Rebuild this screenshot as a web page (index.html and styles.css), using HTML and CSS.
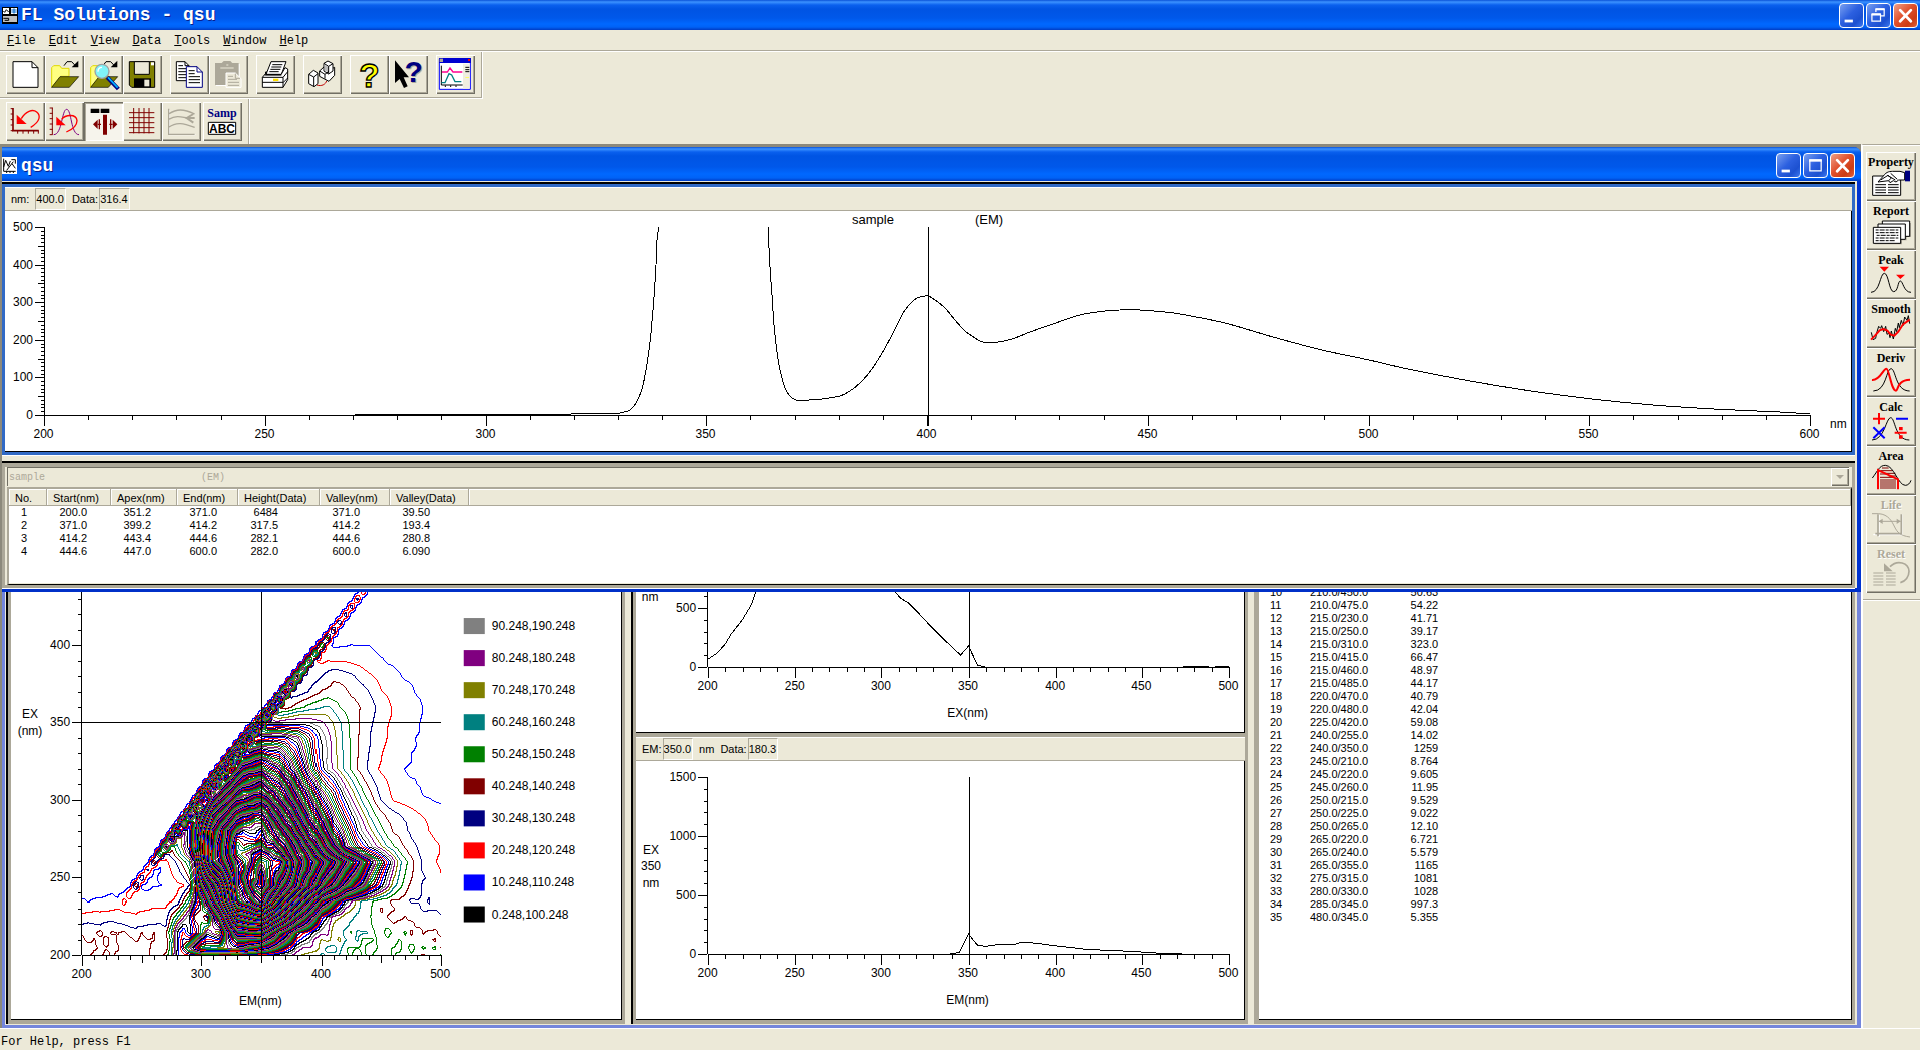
FILE: index.html
```html
<!DOCTYPE html>
<html lang="en">
<head>
    <meta charset="UTF-8">
    <meta name="viewport" content="width=device-width, initial-scale=1.0">
    <title>FL Solutions - qsu</title>
    <link rel="stylesheet" href="styles.css">
</head>
<body>
    <header class="titlebar">
        <svg class="app-icon" viewBox="0 0 48 51">
            <path fill="#000" d="M0 0h48v51H0z"/>
            <path fill="#fff" d="M3 3h18v18H3zM27 3h18v18H27z"/>
            <path fill="#c0c0c0" d="M3 27h42v18H3z"/>
            <path fill="none" stroke="#000" stroke-width="3" d="M4 12l4 4 5-8 7 7M4 34h16v6H8"/>
            <path fill="none" stroke="#06c" stroke-width="3" d="M28 9h16M28 15h16M36 4v16"/>
        </svg>
        <h1>FL Solutions - qsu</h1>
        <div class="caption-buttons">
            <button class="cap" aria-label="Minimize"><svg viewBox="0 0 75 75"><path fill="#fff" d="M15 51h27v9H15z"/></svg></button>
            <button class="cap" aria-label="Restore"><svg viewBox="0 0 75 75"><path fill="none" stroke="#fff" stroke-width="4" d="M29 26V17h27v22H46M16 34h28v22H16z"/><path stroke="#fff" stroke-width="7" d="M28 17h29M15 34h30"/></svg></button>
            <button class="cap close" aria-label="Close"><svg viewBox="0 0 75 75"><path stroke="#fff" stroke-width="9" stroke-linecap="round" d="M20 20l35 36M55 20L20 56"/></svg></button>
        </div>
    </header>

    <nav class="menu">
        <a href="#"><u>F</u>ile</a>
        <a href="#"><u>E</u>dit</a>
        <a href="#"><u>V</u>iew</a>
        <a href="#"><u>D</u>ata</a>
        <a href="#"><u>T</u>ools</a>
        <a href="#"><u>W</u>indow</a>
        <a href="#"><u>H</u>elp</a>
    </nav>

    <div class="toolbar main-tools">
        <div class="group">
            <button class="tool" aria-label="New"><svg viewBox="0 0 117 117"><path class="pg" d="M21 20h57l18 18v59H21z"/><path class="ln" d="M78 20v18h18"/></svg></button>
            <button class="tool" aria-label="Open"><svg viewBox="0 0 117 117">
                <path fill="#ffff80" stroke="#e0d800" stroke-width="3" d="M20 97V38l6-6h18l6 8h22v24H48z"/>
                <path fill="#808000" stroke="#000" stroke-width="2" d="M45 65h56L73 97H20z"/>
                <path class="ln" d="M57 32l9-12h14l12 13"/><path d="M100 17v20H80z"/>
            </svg></button>
            <button class="tool" aria-label="Find"><svg viewBox="0 0 117 117">
                <path fill="#ffff80" stroke="#e0d800" stroke-width="3" d="M20 97V38l6-6h18l6 8h22v24H48z"/>
                <path fill="#808000" stroke="#000" stroke-width="2" d="M45 65h56L73 97H20z"/>
                <path class="ln" d="M57 32l9-12h14l12 13"/><path d="M100 17v20H80z"/>
                <path stroke="#000080" stroke-width="12" d="M70 67l33 35"/><path stroke="#00b0ff" stroke-width="5" d="M72 67l29 31"/>
                <circle cx="54" cy="49" r="21" fill="#80f4f8" stroke="#a0a0a0" stroke-width="4"/>
                <path fill="none" stroke="#fff" stroke-width="4" d="M42 50c0-8 5-13 12-13"/>
            </svg></button>
            <button class="tool" aria-label="Save"><svg viewBox="0 0 117 117">
                <path fill="#808000" stroke="#000" stroke-width="3" d="M19 20h76v77H26l-7-7z"/>
                <path fill="#ece9d8" stroke="#000" stroke-width="3" d="M34 20h45v38H34z"/>
                <path fill="#fff" d="M84 22h9v9h-9z"/><path d="M33 70h51v27H33z"/><path fill="#ece9d8" d="M64 74h15v20H64z"/>
            </svg></button>
        </div>
        <div class="group">
            <button class="tool" aria-label="Copy"><svg viewBox="0 0 117 117">
                <path class="pg" d="M19 20h26l12 12v45H19z"/><path class="ln" d="M45 20v12h12M25 32h14M25 41h24M25 50h24M25 59h24M25 68h24"/>
                <path fill="#fff" stroke="#000080" stroke-width="3" d="M49 35h32l16 16v46H49z"/><path fill="none" stroke="#000080" stroke-width="3" d="M81 35v16h16"/><path class="ln" d="M56 47h18M56 56h18M56 65h34M56 74h34M56 83h34"/>
            </svg></button>
            <button class="tool" aria-label="Paste" disabled><svg viewBox="0 0 117 117">
                <path fill="#fff" d="M21 27h20l6-6h20l6 6h19v66H21z"/><path fill="#aca899" d="M18 24h20l6-6h20l6 6h19v66H18z"/>
                <path stroke="#ece9d8" stroke-width="3" d="M34 39h40M52 30h6"/>
                <path fill="#ece9d8" stroke="#fff" stroke-width="3" d="M51 54h28l17 17v26H51z"/>
                <path class="gr" d="M57 64h15M57 73h27M57 82h33M57 91h33M79 56v14h14"/>
            </svg></button>
        </div>
        <div class="group">
            <button class="tool" aria-label="Print"><svg viewBox="0 0 117 117">
                <path class="pg" d="M45 20h45L76 58H30z"/><path class="ln" d="M49 29h30M46 36h30M43 43h30M40 50h28"/>
                <path class="pg" d="M19 67l12-14h-4l4-3-2 9h46l12-21 8 4v32L81 97H19z"/>
                <path class="ln" d="M19 67h62v30M19 82h62M81 67l14-17M81 83l14-14M26 60h50"/><path fill="#ffe000" d="M51 71h16v7H51z"/>
            </svg></button>
        </div>
        <div class="group">
            <button class="tool" aria-label="Link"><svg viewBox="0 0 117 117">
                <path class="pg" d="M17 58l14-12 14 8v32l-12 9-16-9zM50 48l14-13 14 10 17-8v24L78 79 50 64z"/>
                <path class="pg" d="M63 25l12-7 15 8v22l-13 9-14-9z"/><path fill="#bbb" d="M65 29l12 7v17l-12-7z"/>
                <path class="ln" d="M17 58l15 8 13-10M32 66v28M63 25l14 9 13-8M77 34v22M50 48l16 10M66 58v13M66 58l12-9"/>
                <path fill="none" stroke="#c00000" stroke-width="3" d="M42 90c14 5 26-2 29-12"/>
            </svg></button>
        </div>
        <div class="group">
            <button class="tool" aria-label="Help"><svg viewBox="0 0 117 117"><text x="58" y="97" class="qmark yellow">?</text></svg></button>
            <button class="tool" aria-label="Context help"><svg viewBox="0 0 117 117">
                <text x="77" y="84" class="qmark shade">?</text><text x="74" y="82" class="qmark navy">?</text>
                <path d="M18 16v68l14-12 13 27 11-5-12-27h16z"/>
            </svg></button>
        </div>
        <div class="group">
            <button class="tool" aria-label="Monitor"><svg viewBox="0 0 117 117">
                <path fill="#fff" stroke="#00f" stroke-width="3" d="M10 11h93v92H10z"/><path fill="#0000d0" d="M9 9h96v15H9z"/>
                <path fill="#aca899" d="M11 11h10v10H11z"/><path fill="#f00" d="M96 12h6v6h-6z"/><path fill="#f0eee0" d="M81 26h20v75H81z"/>
                <path class="ln" d="M16 32v58h64M28 91v5M44 91v5M60 91v5M88 37h12M88 44h12M88 50h12"/>
                <path fill="none" stroke="#ff0090" stroke-width="4" d="M18 51h16l8-12 9 12h28"/>
                <path fill="none" stroke="#008080" stroke-width="4" d="M16 83h11l12-27 8 4 10 20h19"/><path fill="#ff6" d="M88 66h11v3H88z"/>
            </svg></button>
        </div>
    </div>

    <div class="toolbar view-tools">
        <div class="group">
            <button class="tool" aria-label="Undo scale"><svg viewBox="0 0 117 117">
                <path fill="none" stroke="#800000" stroke-width="5" d="M21 18v68M18 86h80"/>
                <path class="mr" d="M14 20h7M14 36h7M14 53h7M14 69h7M14 86h7M35 85v10M51 85v10M67 85v10M83 85v10M97 85v10"/>
                <path fill="none" stroke="#f00" stroke-width="4" d="M46 50c12-22 34-30 46-20s12 28-18 46"/><path fill="#f00" d="M32 38v28h30z"/>
            </svg></button>
            <button class="tool" aria-label="Auto scale"><svg viewBox="0 0 117 117">
                <path class="mr" d="M22 17v81M14 18h9M14 34h9M14 50h9M14 66h9M14 82h9M14 98h9"/>
                <path fill="none" stroke="#800080" stroke-width="3" d="M26 98c26 0 24-76 39-76s12 76 37 76"/>
                <path fill="none" stroke="#f00" stroke-width="4" d="M50 52c10-14 44-18 46 4 0 16-14 26-32 34"/><path fill="#f00" d="M34 44v26h28z"/>
            </svg></button>
            <button class="tool pressed" aria-label="Trace"><svg viewBox="0 0 117 117">
                <path d="M20 20h26v13H20zM50 20h26v13H50z"/>
                <path fill="#800000" d="M57 38h12v60H57zM27 67l14-14v28zM100 67L86 53v28z"/>
                <path stroke="#800000" stroke-width="4" d="M41 67h10M46 52v30M76 67h10M80 52v30"/>
            </svg></button>
            <button class="tool" aria-label="Grid"><svg viewBox="0 0 117 117"><path class="mr" d="M18 32h76M18 47h76M18 62h76M18 77h76M18 92h76M32 18v76M48 18v76M63 18v76M78 18v76"/></svg></button>
            <button class="tool" aria-label="Overlay" disabled><svg viewBox="0 0 117 117">
                <path fill="none" stroke="#fff" stroke-width="4" d="M22 24v74h78"/>
                <path fill="none" stroke="#aca899" stroke-width="4" d="M20 20v77h78M20 36c24-16 44-16 78 0M20 52c26-14 40-6 56-4M20 76c24-18 44-12 78 0"/>
                <path fill="none" stroke="#aca899" stroke-width="6" d="M94 36L74 48l20 14M72 48h26"/>
            </svg></button>
        </div>
        <div class="group">
            <button class="tool" aria-label="Sample name"><svg viewBox="0 0 117 117">
                <text x="57" y="45" class="samp">Samp</text><path class="pg" d="M16 61h82v36H16z"/><text x="57" y="92" class="abc">ABC</text>
            </svg></button>
        </div>
    </div>

    <main class="workspace">
        <div class="mdi">
            <section class="front">
                <div class="titlebar child">
                    <svg class="doc-icon" viewBox="0 0 48 51"><path fill="#fff" d="M0 0h45v51H0z"/><path fill="none" stroke="#000" stroke-width="3" d="M5 5v38h36M5 30l6-20 8 18 6-16M14 40l20-26M28 8h12v12M30 20l10 14M14 43v5M24 43v5M34 43v5"/></svg>
                    <h2>qsu</h2>
                    <div class="caption-buttons">
                        <button class="cap" aria-label="Minimize window"><svg viewBox="0 0 75 75"><path fill="#fff" d="M15 51h27v9H15z"/></svg></button>
                        <button class="cap" aria-label="Maximize window"><svg viewBox="0 0 75 75"><path fill="none" stroke="#fff" stroke-width="4" d="M19 20h37v35H19z"/><path stroke="#fff" stroke-width="8" d="M17 21h41"/></svg></button>
                        <button class="cap close" aria-label="Close window"><svg viewBox="0 0 75 75"><path stroke="#fff" stroke-width="9" stroke-linecap="round" d="M20 20l35 36M55 20L20 56"/></svg></button>
                    </div>
                </div>
                <div class="pane selected">
                    <div class="readout"><span>nm:</span><output class="wide">400.0</output><span>Data:</span><output>316.4</output></div>
                    <svg id="spectrum" class="chart" viewBox="5 211 1846 240"></svg>
                </div>
                <div class="pane peaks">
                    <div class="combo">
                        <select disabled aria-label="Spectrum"><option>sample&nbsp;&nbsp;&nbsp;&nbsp;&nbsp;&nbsp;&nbsp;&nbsp;&nbsp;&nbsp;&nbsp;&nbsp;&nbsp;&nbsp;&nbsp;&nbsp;&nbsp;&nbsp;&nbsp;&nbsp;&nbsp;&nbsp;&nbsp;&nbsp;&nbsp;&nbsp;(EM)</option></select>
                        <span class="drop"></span>
                    </div>
                    <div class="table-box">
                        <table class="peak-table">
                            <colgroup><col class="c-no"><col class="c-start"><col class="c-apex"><col class="c-end"><col class="c-height"><col class="c-valley"><col class="c-vdata"><col></colgroup>
                            <thead>
                                <tr><th>No.</th><th>Start(nm)</th><th>Apex(nm)</th><th>End(nm)</th><th>Height(Data)</th><th>Valley(nm)</th><th>Valley(Data)</th><th></th></tr>
                            </thead>
                            <tbody id="peakRows"></tbody>
                        </table>
                    </div>
                </div>
            </section>

            <section class="back">
                <div class="pane dim">
                    <svg id="contour" class="chart" viewBox="11 593 610 426"></svg>
                </div>
                <div class="split">
                    <div class="pane dim upper"><svg id="exChart" class="chart" viewBox="636 593 608 140"></svg></div>
                    <div class="pane dim">
                        <div class="readout"><span>EM:</span><output>350.0</output><span>nm</span><span>Data:</span><output>180.3</output></div>
                        <svg id="emChart" class="chart" viewBox="636 762 608 257"></svg>
                    </div>
                </div>
                <div class="pane dim list">
                    <table class="ex-table"><tbody id="exRows"></tbody></table>
                </div>
            </section>
        </div>

        <aside class="side">
            <div class="side-tools">
                <button><span>Property</span><svg viewBox="0 0 150 93">
                    <path class="pg" d="M20 18h84v58H20z"/><path class="ln" d="M28 44h32M28 52h32M28 60h32M28 68h32M66 44h32M66 52h32M66 60h32M66 68h32"/>
                    <path class="pg" d="M36 36l16-18C62 4 72 4 84 4h18l14 4v22H98l-8 6-8-4-10 6-4-6z"/><path class="ln" d="M44 30l22-14 10 8-8 8M64 16l24 14M74 10l20 18"/>
                    <path fill="#000080" d="M117 2h15v32h-15z"/>
                </svg></button>
                <button><span>Report</span><svg viewBox="0 0 150 93">
                    <path fill="#aca899" d="M26 76h82V64h14V54h13V12h-4v38H26z"/>
                    <path class="pg" d="M49 6h82v46H49z"/><path class="pg" d="M36 15h82v46H36z"/><path class="pg" d="M22 25h82v48H22z"/>
                    <path class="ln" stroke-dasharray="9 3 15 3" d="M29 33h68M29 41h68M32 49h65M29 57h68M29 65h60"/>
                </svg></button>
                <button><span>Peak</span><svg viewBox="0 0 150 93"><path class="ln" d="M15 73C42 73 42 16 55 16s14 55 28 55 12-32 20-32 10 34 32 34"/><path fill="#f00" d="M41 -4h28L55 11zM90 20h27l-14 13z"/></svg></button>
                <button><span>Smooth</span><svg viewBox="0 0 150 93"><path class="ln" d="M16 46l5 22 8-4 3-16 6-20 6 6 3-8 6 18 6-16 4 24 6-4 3 14 4-20 6 24 6-32 4 10 5-26 3 14 6-22 5 16 5-26 7 10 4-14 4 24"/><path class="rd" d="M15 68l12-12 14-16 11-4 12 5 10 12 11 3 12-12 14-22 20-14"/></svg></button>
                <button><span>Deriv</span><svg viewBox="0 0 150 93"><path class="ln" d="M22 75C62 75 60 8 75 8s12 67 56 67"/><path class="rd" d="M18 42c24 2 34-34 43-34s14 66 29 66c7 0 2-32 42-33"/></svg></button>
                <button><span>Calc</span><svg viewBox="0 0 150 93"><path class="ln" d="M18 75C56 75 60 8 74 8s12 67 56 67"/><path class="rd" d="M21 11h36M39 -6v34M86 53h36"/><path fill="#f00" d="M99 36h11v10H99zM99 61h11v10H99z"/><path class="bl" d="M90 11h36M22 37l34 33M56 37L22 70"/></svg></button>
                <button><span>Area</span><svg viewBox="0 0 150 93"><path fill="none" stroke="#800000" stroke-width="3" d="M48 12h20M44 20h36M56 28h32M68 36h22M42 30h18M42 40h40M42 48h48M42 54h48M42 60h48M42 66h48M42 72h48"/><path class="ln" d="M19 42C36 20 40 4 58 4c26 0 38 60 60 60 8 0 14-6 17-15"/><path class="rd" d="M36 76V18l60 28v30"/></svg></button>
                <button disabled><span>Life</span><svg viewBox="0 0 150 93"><path stroke="#fff" fill="none" stroke-width="4" d="M39 6v66M108 4v64M22 65h84"/><path fill="none" stroke="#aca899" stroke-width="5" d="M36 4v66M106 4v58M28 62h80"/><path class="gr" d="M18 2h20c30 2 40 24 48 40s16 26 46 30M40 25h64"/><path fill="#aca899" d="M38 25l12-8v16zM104 25l-12-8v16z"/></svg></button>
                <button disabled><span>Reset</span><svg viewBox="0 0 150 93"><path class="gr" d="M22 33h30M22 42h30M22 51h30M22 60h30M22 69h30M60 33h29M60 42h29M60 51h29M60 60h29M60 69h29"/><path fill="none" stroke="#aca899" stroke-width="5" d="M72 14C94-8 128 2 129 28c0 16-10 30-26 34"/><path fill="#aca899" d="M54 4v24h26z"/></svg></button>
            </div>
        </aside>
    </main>

    <footer class="status">For Help, press F1</footer>

    <script src="charts.js"></script>
</body>
</html>
```
FILE: styles.css
```css
* {
    box-sizing: border-box;
}

body {
    margin: 0;
    min-height: 100vh;
    display: flex;
    flex-direction: column;
    background-color: #ece9d8;
    color: #000;
    font-family: "Liberation Sans", Arial, sans-serif;
    font-size: 11px;
}

button {
    font: inherit;
    padding: 0;
    border: none;
    background: #ece9d8;
}

svg {
    display: block;
}

/* title bars */
.titlebar {
    display: flex;
    align-items: center;
    height: 30px;
    padding: 0 2px;
    background: linear-gradient(#0a52d8 0, #3c92ff 2px, #0a60ee 5px, #0054e3 9px, #0058ea 18px, #0068ff 24px, #0062f6 27px, #003cc4 30px);
    color: #fff;
}

.titlebar h1, .titlebar h2 {
    flex: 1;
    margin: 0 0 0 3px;
    font-family: "Liberation Mono", monospace;
    font-size: 18px;
    line-height: 30px;
    font-weight: bold;
    text-shadow: 1px 1px 0 #0a1e8c;
}

.titlebar.child {
    height: 34px;
    padding: 2px 2px 0 0;
    border-radius: 0 7px 0 0;
    background: linear-gradient(#0a52d8 0, #3c92ff 2px, #0a60ee 5px, #0054e3 9px, #0058ea 20px, #0068ff 27px, #0062f6 31px, #003cc4 34px);
}

.titlebar.child h2 {
    padding-top: 2px;
}

.app-icon, .doc-icon {
    width: 16px;
    height: 17px;
}

.caption-buttons {
    display: flex;
    gap: 2px;
}

.cap {
    width: 25px;
    height: 25px;
    border: 1px solid #fff;
    border-radius: 4px;
    background: linear-gradient(135deg, #7aa0f0, #2c60e0 45%, #1c50d0 75%, #3c78f0);
}

.cap.close {
    background: linear-gradient(135deg, #f0a088, #e0502c 45%, #cc3c14 75%, #e06038);
}

.cap svg {
    width: 23px;
    height: 23px;
}

/* menu and toolbars */
.menu {
    display: flex;
    gap: 13px;
    height: 22px;
    padding: 0 7px;
    line-height: 22px;
    border-bottom: 1px solid #fff;
    box-shadow: inset 0 -1px 0 #aca899;
    font-family: "Liberation Mono", monospace;
    font-size: 12px;
}

.menu a {
    color: #000;
    text-decoration: none;
}

.toolbar {
    display: flex;
    align-self: flex-start;
    gap: 8px;
    padding: 3px 7px 0 6px;
    border-right: 1px solid #fff;
    box-shadow: inset -1px 0 0 #aca899;
}

.main-tools {
    height: 47px;
    border-bottom: 1px solid #fff;
    box-shadow: inset -1px -1px 0 #aca899;
}

.view-tools {
    height: 45px;
    gap: 2px;
}

.group {
    display: flex;
}

.tool {
    width: 39px;
    height: 39px;
    box-shadow: inset 1px 1px 0 #fff, inset -1px -1px 0 #716f64, inset -2px -2px 0 #aca899;
}

.tool svg {
    width: 39px;
    height: 39px;
}

.tool.pressed {
    background: #f6f4ec;
    box-shadow: inset 1px 1px 0 #716f64, inset 2px 2px 0 #aca899, inset -1px -1px 0 #fff;
}

.pg {
    fill: #fff;
    stroke: #000;
    stroke-width: 3;
}

.ln {
    fill: none;
    stroke: #000;
    stroke-width: 3;
}

.mr {
    fill: none;
    stroke: #800000;
    stroke-width: 3;
}

.gr {
    fill: none;
    stroke: #aca899;
    stroke-width: 3;
}

.rd, .bl {
    fill: none;
    stroke: #f00;
    stroke-width: 6;
}

.bl {
    stroke: #00f;
}

.qmark {
    font-size: 100px;
    font-weight: bold;
    text-anchor: middle;
}

.qmark.yellow {
    fill: #ff0;
    stroke: #000;
    stroke-width: 4;
}

.qmark.navy, .qmark.shade {
    font-size: 90px;
    fill: #000080;
}

.qmark.shade {
    fill: #aca899;
}

.samp, .abc {
    font-size: 36px;
    font-weight: bold;
    text-anchor: middle;
}

.samp {
    font-family: "Liberation Serif", serif;
    fill: #000080;
}

/* workspace */
.workspace {
    flex: 1;
    display: flex;
}

.mdi {
    flex: 1;
    min-width: 0;
    display: flex;
    flex-direction: column;
    border-top: 3px solid #8c897c;
    border-left: 2px solid #8c897c;
    background: #8c897c;
}

.front {
    border-right: 4px solid #0033d0;
    border-bottom: 4px solid #0030c8;
    border-radius: 0 8px 0 0;
    background: #ece9d8;
}

.front .titlebar {
    margin-right: -4px;
    padding-right: 6px;
}

.front .pane {
    margin-right: 2px;
}

.pane {
    background: #fff;
}

.pane.selected {
    border: 3px solid #316ac5;
    box-shadow: 0 -2px 0 #000, 0 1px 0 #fff;
    margin-top: 3px;
}

.chart {
    width: 100%;
    height: auto;
    font-size: 12px;
    border: 0 solid #000;
    box-sizing: content-box;
}

.pane.selected .chart {
    width: calc(100% - 1px);
    border-width: 0 1px 1px 0;
}

.chart .heading {
    font-size: 13px;
}

.readout {
    display: flex;
    align-items: center;
    gap: 6px;
    height: 24px;
    padding: 0 6px;
    background: #ece9d8;
    border-top: 1px solid #fff;
    border-bottom: 1px solid #aca899;
}

.readout output {
    height: 22px;
    padding: 0 1px 0 0;
    line-height: 21px;
    border: 1px solid;
    border-color: #aca899 #fff #fff #aca899;
}

.readout span + output {
    margin-left: -5px;
}

.readout span + .wide {
    margin-left: 0;
}

.pane.peaks {
    margin-top: 8px;
    padding: 1px 0 0;
    border: 3px solid #aca899;
    border-top-width: 4px;
    box-shadow: 0 -2px 0 #000, 0 1px 0 #fff;
    background: #ece9d8;
}

.combo {
    display: flex;
    height: 18px;
    margin: 0 3px 0 2px;
    border-left: 1px solid #716f64;
    box-shadow: 0 -1px 0 #716f64;
}

.combo select {
    flex: 1;
    appearance: none;
    padding: 0 1px;
    border: none;
    background: #ece9d8;
    color: #aca899;
    opacity: 1;
    font-family: "Liberation Mono", monospace;
    font-size: 10px;
}

.drop {
    display: flex;
    align-items: center;
    justify-content: center;
    width: 18px;
    box-shadow: inset 1px 1px 0 #fff, inset -1px -1px 0 #716f64, inset -2px -2px 0 #aca899;
}

.drop::before {
    content: "";
    border: 4px solid transparent;
    border-top-color: #aca899;
    border-bottom: none;
}

.table-box {
    height: 98px;
    margin-top: 1px;
    margin-left: 2px;
    border: 2px solid #aca899;
    border-right: 1px solid #000;
    border-bottom: 1px solid #000;
    background: #fff;
    box-shadow: inset 0 -1px 0 #ece9d8;
}

.peak-table {
    width: 100%;
    table-layout: fixed;
    border-collapse: collapse;
}

.peak-table th {
    height: 17px;
    padding: 0 0 0 6px;
    background: #ece9d8;
    box-shadow: inset -1px -1px 0 #aca899, inset 1px 1px 0 #fff;
    font-weight: normal;
    text-align: left;
    white-space: nowrap;
}

.peak-table td {
    height: 13px;
    padding: 0 0 0 12px;
    line-height: 13px;
}

.num {
    display: inline-block;
    width: 28px;
    text-align: right;
}

.c-no { width: 38px; }
.c-start { width: 64px; }
.c-apex { width: 66px; }
.c-end { width: 61px; }
.c-height { width: 82px; }
.c-valley { width: 70px; }
.c-vdata { width: 79px; }

.back {
    flex: 1;
    display: grid;
    grid-template-columns: 619fr 617fr 601fr;
    gap: 6px;
    padding: 0 2px 1px 1px;
    border: solid #7486dc;
    border-width: 0 4px 3px 3px;
    background: #ece9d8;
}

.pane.dim {
    min-width: 0;
    border: solid #aca899;
    border-width: 0 3px 4px;
    box-shadow: inset -1px -1px 0 #000;
}

.split {
    min-width: 0;
    display: flex;
    flex-direction: column;
    border-left: 2px solid #000;
}

.back > .pane.dim {
    position: relative;
    border-left-width: 5px;
}

/* dark edge beside the grey pane border */
.back > .pane.dim::before {
    content: "";
    position: absolute;
    top: 0;
    bottom: -4px;
    left: -5px;
    width: 2px;
    background: #000;
}

.pane.dim .chart {
    margin-bottom: 1px;
}

.split .pane:last-child {
    flex: 1;
}

.list {
    overflow: hidden;
}

.ex-table {
    margin: -6px 0 0 11px;
    border-collapse: collapse;
}

.ex-table td {
    height: 13px;
    padding: 0;
    line-height: 13px;
    min-width: 40px;
}

.ex-table td:last-child {
    width: 70px;
    text-align: right;
}

/* analysis buttons on the right */
.side {
    width: 59px;
    border-top: 1px solid #aca899;
    border-left: 2px solid #fff;
}

.side-tools {
    display: flex;
    flex-direction: column;
    padding: 6px 2px 6px 3px;
    border-top: 1px solid #fff;
    border-bottom: 1px solid #aca899;
    box-shadow: 0 1px 0 #fff;
}

.side button {
    width: 50px;
    height: 49px;
    box-shadow: inset 1px 1px 0 #fff, inset -1px -1px 0 #716f64, inset -2px -2px 0 #aca899;
    font-family: "Liberation Serif", serif;
    font-size: 12px;
    font-weight: bold;
    line-height: 16px;
    color: #000;
}

.side button span {
    display: block;
    padding-top: 2px;
    height: 18px;
}

.side button:disabled {
    color: #aca899;
    text-shadow: 1px 1px 0 #fff;
}

.side svg {
    width: 50px;
    height: 31px;
    overflow: visible;
}

.status {
    height: 22px;
    padding: 0 1px;
    border-top: 1px solid #fff;
    font-family: "Liberation Mono", monospace;
    font-size: 12px;
    line-height: 26px;
}
```
FILE: charts.js
```js
const NS = 'http://www.w3.org/2000/svg';

function add(svg, tag, attrs, text) {
    const el = document.createElementNS(NS, tag);
    for (const key in attrs) el.setAttribute(key, attrs[key]);
    if (text !== undefined) el.textContent = text;
    svg.appendChild(el);
    return el;
}

function stroke(svg, d) {
    add(svg, 'path', { d: d, fill: 'none', stroke: '#000', 'shape-rendering': 'crispEdges' });
}

// smooth line through a flat list of x,y values
function curve(svg, p) {
    let d = `M${p[0]} ${p[1]}`;
    for (let i = 0; i < p.length - 2; i += 2) {
        const a = Math.max(i - 2, 0);
        const b = Math.min(i + 4, p.length - 2);
        d += `C${p[i] + (p[i + 2] - p[a]) / 6} ${p[i + 1] + (p[i + 3] - p[a + 1]) / 6}`
            + ` ${p[i + 2] - (p[b] - p[i]) / 6} ${p[i + 3] - (p[b + 1] - p[i + 1]) / 6}`
            + ` ${p[i + 2]} ${p[i + 3]}`;
    }
    stroke(svg, d);
}

function label(svg, x, y, text, anchor = 'middle', cls = '') {
    add(svg, 'text', { x: x, y: y, 'text-anchor': anchor, class: cls }, text);
}

// horizontal axis: value v0..v1 drawn between x0 and x1
function xAxis(svg, y, x0, x1, v0, v1, labels) {
    let d = `M${x0} ${y}.5H${x1 + 1}`;
    for (let v = v0; v <= v1; v += 10) {
        const x = Math.round(x0 + (v - v0) * (x1 - x0) / (v1 - v0)) + 0.5;
        d += `M${x} ${y}v${v % labels === 0 ? 11 : v % 50 === 0 ? 8 : 5}`;
        if (v % labels === 0) label(svg, x - 1, y + 23, v);
    }
    stroke(svg, d);
}

// vertical axis: v0 at the bottom (y0), v1 at the top (y1)
function yAxis(svg, x, y0, y1, v0, v1, minor, middle, labels) {
    let d = `M${x}.5 ${y0}V${y1}`;
    for (let v = v0; v <= v1; v += minor) {
        const y = Math.round(y0 + (v - v0) * (y1 - y0) / (v1 - v0));
        d += `M${x} ${y}.5h-${v % labels === 0 ? 9 : v % middle === 0 ? 6 : 3}`;
        if (v % labels === 0) label(svg, x - 11, y + 4, v, 'end');
    }
    stroke(svg, d);
}

// emission spectrum
const spectrum = document.getElementById('spectrum');
yAxis(spectrum, 44, 415, 227, 0, 500, 10, 50, 100);
xAxis(spectrum, 415, 44, 1810, 200, 600, 50);
label(spectrum, 852, 224, 'sample', 'start', 'heading');
label(spectrum, 975, 224, '(EM)', 'start', 'heading');
label(spectrum, 1830, 428, 'nm', 'start');
stroke(spectrum, 'M928.5 227V426M355 414.5H571M571 413.5H620');
curve(spectrum, [620, 413, 630, 410, 636, 403, 642, 389, 646, 370, 649, 350, 651, 333, 654, 297, 656, 265, 657, 240, 659, 227]);
curve(spectrum, [768, 227, 770, 267, 772, 295, 774, 325, 777, 352, 780, 370, 785, 388, 790, 396, 796, 400, 809, 400, 822, 399, 840, 396, 850, 391, 861, 382, 872, 369, 885, 348, 895, 329, 905, 310, 914, 300, 920, 297, 928, 296, 935, 300, 945, 308, 955, 320, 965, 331, 975, 338, 983, 342, 998, 342, 1012, 339, 1030, 332, 1050, 325, 1080, 315, 1105, 311, 1120, 310, 1140, 310, 1165, 312, 1180, 314, 1225, 323, 1273, 337, 1322, 350, 1369, 360, 1408, 369, 1470, 381, 1531, 391, 1592, 399, 1653, 405, 1714, 409, 1780, 412, 1810, 414]);

// excitation slice
const exChart = document.getElementById('exChart');
yAxis(exChart, 707, 668, 597, 0, 600, 100, 500, 500);
xAxis(exChart, 668, 708, 1228, 200, 500, 50);
label(exChart, 650, 602, 'nm');
label(exChart, 967, 718, 'EX(nm)');
stroke(exChart, 'M968.5 593V677M707.5 593V597');
stroke(exChart, 'M708 660L717 654 725 645 731 635 742 621 751 606 756 592M894 592L900 599 908 604 918 614 930 627 942 639 960 656 968 647 977 666 985 668M1182 667H1208M1214 667H1228');

// emission slice
const emChart = document.getElementById('emChart');
yAxis(emChart, 707, 955, 778, 0, 1500, 100, 500, 500);
xAxis(emChart, 955, 708, 1228, 200, 500, 50);
label(emChart, 651, 855, 'EX');
label(emChart, 651, 871, '350');
label(emChart, 651, 888, 'nm');
label(emChart, 967, 1005, 'EM(nm)');
stroke(emChart, 'M968.5 778V964');
stroke(emChart, 'M948 955L959 953 968 935 977 946 985 947 1000 945 1015 945 1020 943 1037 944 1050 946 1068 948 1085 950 1105 951 1130 952 1160 954 1190 955');

// contour map: for each excitation, pairs of [emission, intensity]
const colors = ['#000000', '#0000ff', '#ff0000', '#000080', '#800000', '#008000', '#008080', '#808000', '#800080', '#808080'];
const rows = [
    [200, [[200, 42], [270, 40], [275, 60], [280, 110], [300, 115], [350, 92], [380, 75], [410, 58], [440, 52], [500, 44]]],
    [205, [[200, 46], [270, 38], [275, 55], [282, 120], [300, 260], [330, 290], [350, 220], [380, 88], [400, 68], [440, 53], [500, 43]]],
    [215, [[200, 38], [270, 36], [278, 70], [282, 140], [290, 92], [297, 130], [305, 190], [315, 160], [330, 440], [350, 460], [365, 270], [380, 140], [400, 80], [420, 60], [450, 50], [500, 40]]],
    [225, [[200, 24], [250, 24], [270, 24], [280, 60], [290, 100], [297, 170], [305, 120], [318, 320], [330, 680], [350, 780], [380, 330], [400, 120], [410, 76], [430, 54], [460, 38], [500, 32]]],
    [235, [[200, 11], [240, 13], [270, 17], [280, 25], [290, 60], [300, 140], [315, 420], [330, 950], [350, 1120], [380, 560], [400, 240], [420, 100], [432, 62], [455, 40], [480, 30], [500, 22]]],
    [245, [[200, 3], [250, 8], [270, 11], [285, 20], [292, 36], [297, 110], [300, 260], [315, 520], [330, 980], [350, 1240], [380, 780], [400, 480], [420, 280], [440, 150], [450, 105], [458, 70], [470, 46], [482, 32], [500, 24]]],
    [260, [[200, 2], [265, 9], [272, 20], [282, 36], [290, 60], [295, 110], [300, 420], [310, 740], [330, 1000], [350, 1180], [365, 1130], [380, 860], [400, 620], [420, 410], [440, 220], [457, 102], [465, 64], [477, 40], [484, 29], [500, 18]]],
    [268, [[200, 1], [266, 14], [275, 40], [285, 80], [294, 140], [300, 480], [310, 760], [330, 1060], [350, 1080], [365, 1000], [380, 800], [400, 480], [420, 200], [436, 110], [455, 62], [470, 40], [482, 28], [500, 20]]],
    [280, [[200, 1], [272, 20], [285, 70], [294, 140], [299, 400], [310, 720], [330, 1000], [350, 1000], [370, 800], [390, 480], [410, 230], [430, 102], [442, 70], [451, 51], [459, 40], [474, 29], [491, 20], [500, 17]]],
    [288, [[200, 1], [280, 20], [294, 100], [300, 380], [310, 640], [330, 890], [343, 960], [352, 960], [370, 700], [390, 400], [410, 190], [426, 100], [440, 62], [448, 48], [456, 40], [470, 30], [488, 20], [500, 15]]],
    [300, [[200, 0], [290, 20], [300, 120], [310, 420], [330, 700], [350, 770], [370, 560], [385, 360], [400, 210], [419, 100], [433, 60], [443, 42], [449, 30], [460, 20], [483, 11], [500, 9]]],
    [320, [[200, 0], [310, 60], [320, 180], [335, 440], [350, 480], [365, 400], [380, 260], [390, 170], [401, 100], [413, 70], [424, 50], [430, 40], [438, 30], [447, 20], [470, 10], [500, 5]]],
    [340, [[200, 0], [330, 60], [340, 160], [350, 215], [365, 220], [380, 190], [390, 140], [398, 102], [412, 70], [420, 56], [431, 40], [441, 30], [455, 20], [480, 10], [500, 7]]],
    [350, [[200, 0], [345, 50], [358, 84], [380, 94], [390, 92], [400, 83], [410, 70], [423, 50], [431, 40], [443, 30], [456, 20], [483, 10], [500, 7]]],
    [360, [[200, 0], [358, 20], [370, 34], [380, 46], [392, 56], [405, 62], [416, 50], [433, 40], [445, 30], [458, 20], [487, 10], [500, 7]]],
    [370, [[200, 0], [370, 16], [380, 24], [390, 31], [400, 41], [415, 45], [422, 40], [441, 30], [451, 20], [478, 10], [500, 5]]],
    [380, [[200, 0], [380, 18], [392, 24], [403, 32], [408, 40], [420, 35], [430, 29], [441, 21], [466, 10], [500, 4]]],
    [390, [[200, 0], [390, 14], [405, 20], [420, 20], [430, 17], [453, 10], [500, 3]]],
    [400, [[200, 0], [400, 8], [420, 10], [432, 11], [445, 9], [500, 2]]],
    [410, [[200, 0], [500, 1]]],
    [440, [[200, 0], [500, 0]]]
];

// height of the scatter ridge where excitation equals emission
const ridge = [[200, 0], [232, 5], [240, 20], [245, 45], [255, 25], [265, 60], [280, 130], [300, 240], [330, 300], [350, 230], [370, 130], [385, 80], [400, 58], [415, 42], [435, 34], [450, 30]];

function lerp(points, v) {
    for (let i = 1; i < points.length; i++) {
        if (v <= points[i][0]) {
            const [a, za] = points[i - 1];
            const [b, zb] = points[i];
            return za + (zb - za) * (v - a) / (b - a);
        }
    }
    return points[points.length - 1][1];
}

function noise(a, b) {
    const s = Math.sin(a * 12.9898 + b * 78.233) * 43758.5453;
    return (s - Math.floor(s)) * 2 - 1;
}

function intensity(em, ex) {
    let i = 1;
    while (i < rows.length - 1 && rows[i][0] < ex) i++;
    const t = (ex - rows[i - 1][0]) / (rows[i][0] - rows[i - 1][0]);
    let z = lerp(rows[i - 1][1], em) * (1 - t) + lerp(rows[i][1], em) * t;
    if (ex > 240 && em < ex) z *= Math.max(0, 1 - (ex - em) / 8);
    let rough = 0.6;
    if (ex < 220) rough = em > 380 ? 10 : 6;
    else if (ex < 240) rough = em > 400 ? 5 : 2;
    else if (ex < 255) rough = em > 470 ? 4 : 2;
    if (z > 3) z += noise(em, ex) * (z < 85 ? rough : z * 0.022);
    const off = (em - ex) / 3;
    return z + lerp(ridge, ex) * Math.exp(-off * off);
}

// the instrument samples every 5 nm and interpolates between the points
const grid = [];
for (let ex = 200; ex <= 445; ex += 5) {
    const line = [];
    for (let em = 200; em <= 505; em += 5) line.push(intensity(em, ex));
    grid.push(line);
}

function levelAt(px, py) {
    const u = (px - 82) / 1.1933 / 5;
    const v = (955 - py) / 1.547 / 5;
    const c = Math.floor(u), r = Math.floor(v);
    const fx = u - c, fy = v - r;
    const z = (grid[r][c] * (1 - fx) + grid[r][c + 1] * fx) * (1 - fy)
        + (grid[r + 1][c] * (1 - fx) + grid[r + 1][c + 1] * fx) * fy;
    return Math.floor((z - 0.248) / 10);
}

const contour = document.getElementById('contour');
const paths = colors.map(() => '');
for (let y = 593; y < 955; y++) {
    for (let x = 82; x < 440; x++) {
        const here = levelAt(x, y);
        const right = levelAt(x + 1, y);
        const up = levelAt(x, y - 1);
        const top = Math.max(here, right, up);
        if (top > 0 && (here !== right || here !== up)) {
            paths[top % 10] += `M${x} ${y}h1v1h-1z`;
        }
    }
}
paths.forEach((d, i) => add(contour, 'path', { d: d, fill: colors[i], 'shape-rendering': 'crispEdges' }));

yAxis(contour, 81, 955, 600, 200, 430, 10, 50, 50);
xAxis(contour, 955, 82, 440, 200, 500, 100);
label(contour, 30, 719, 'EX');
label(contour, 30, 736, '(nm)');
label(contour, 260, 1005, 'EM(nm)');
stroke(contour, 'M81.5 593V600M261.5 593V963M75 723.5H440');
for (let i = 9; i >= 0; i--) {
    const y = 619 + (9 - i) * 32;
    add(contour, 'rect', { x: 463, y: y, width: 21, height: 16, fill: colors[i] });
    label(contour, 491, y + 12, `${i * 10 + 0.248},${100 + i * 10}.248`, 'start');
}

// peak table
const peaks = [
    ['200.0', '351.2', '371.0', '6484', '371.0', '39.50'],
    ['371.0', '399.2', '414.2', '317.5', '414.2', '193.4'],
    ['414.2', '443.4', '444.6', '282.1', '444.6', '280.8'],
    ['444.6', '447.0', '600.0', '282.0', '600.0', '6.090']
];
document.getElementById('peakRows').innerHTML = peaks.map((p, i) =>
    `<tr><td>${i + 1}</td>${p.map(v => `<td><span class="num">${v}</span></td>`).join('')}</tr>`).join('');

// EX/EM pairs, numbered from 10
const pairs = [
    ['210.0/450.0', '50.63'], ['210.0/475.0', '54.22'], ['215.0/230.0', '41.71'], ['215.0/250.0', '39.17'],
    ['215.0/310.0', '323.0'], ['215.0/415.0', '66.47'], ['215.0/460.0', '48.97'], ['215.0/485.0', '44.17'],
    ['220.0/470.0', '40.79'], ['220.0/480.0', '42.04'], ['225.0/420.0', '59.08'], ['240.0/255.0', '14.02'],
    ['240.0/350.0', '1259'], ['245.0/210.0', '8.764'], ['245.0/220.0', '9.605'], ['245.0/260.0', '11.95'],
    ['250.0/215.0', '9.529'], ['250.0/225.0', '9.022'], ['250.0/265.0', '12.10'], ['265.0/220.0', '6.721'],
    ['265.0/240.0', '5.579'], ['265.0/355.0', '1165'], ['275.0/315.0', '1081'], ['280.0/330.0', '1028'],
    ['285.0/345.0', '997.3'], ['480.0/345.0', '5.355']
];
document.getElementById('exRows').innerHTML = pairs.map((p, i) =>
    `<tr><td>${i + 10}</td><td>${p[0]}</td><td>${p[1]}</td></tr>`).join('');
```
